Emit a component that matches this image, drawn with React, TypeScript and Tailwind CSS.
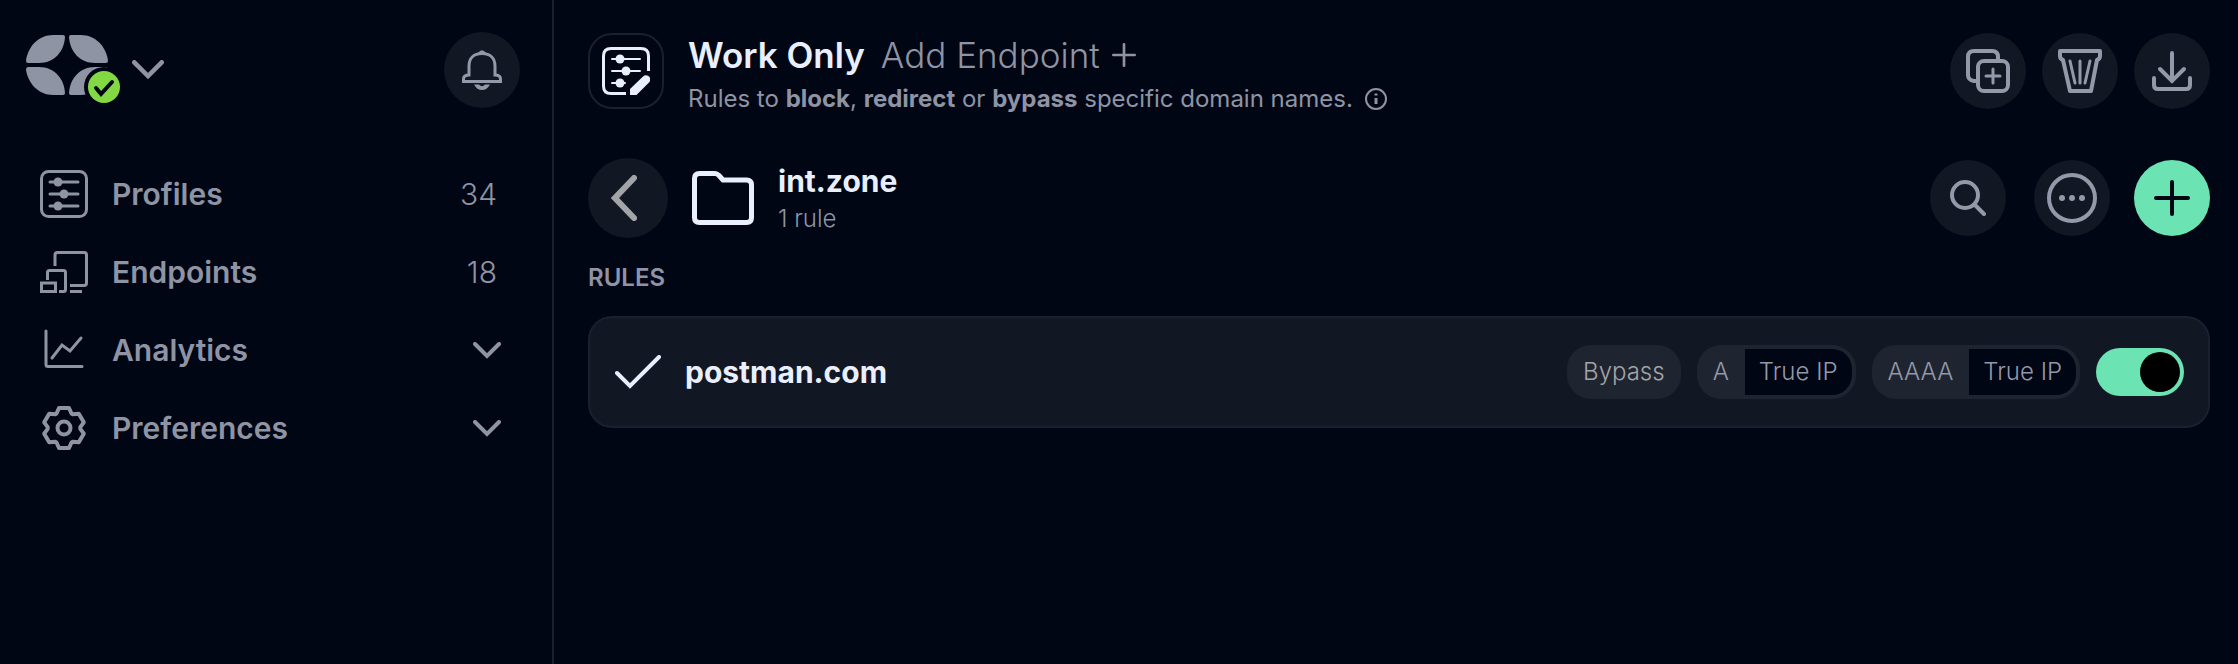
import { useState } from 'react';
import type { ReactNode } from 'react';

interface NavItem {
  label: string;
  icon: ReactNode;
  count?: number;
}

interface RecordChip {
  type: string;
  value: string;
}

const LogoIcon = () => (
  <svg width="96" height="70" viewBox="0 0 96 70" fill="#8f94a5">
    <path d="M0 25.500C2 11 13 0 27 0H37Q39 0 39 2C38 17 28 28 13 28H2Q0 28 0 25.500Z" />
    <path d="M82 25.500C80 11 69 0 55 0H45Q43 0 43 2C44 17 54 28 69 28H80Q82 28 82 25.500Z" />
    <path d="M0 34.500C2 49 13 60 27 60H37Q39 60 39 58C38 43 28 32 13 32H2Q0 32 0 34.500Z" />
    <path d="M82 34.500C80 49 69 60 55 60H45Q43 60 43 58C44 43 54 32 69 32H80Q82 32 82 34.500Z" />
    <circle cx="78" cy="52" r="20" fill="#010615" />
    <circle cx="78" cy="52" r="16" fill="#83d943" />
    <path d="M70 53l5 6 11-12" fill="none" stroke="#010615" strokeWidth="4" strokeLinecap="round" />
  </svg>
);

const ChevronIcon = ({ width = 28 }: { width?: number }) => (
  <svg width={width} viewBox="0 0 28 17" fill="none" stroke="currentColor" strokeWidth="4" strokeLinecap="round">
    <path d="M2 2l12 12L26 2" />
  </svg>
);

const BellIcon = () => (
  <svg width="40" height="40" viewBox="0 0 40 40" fill="none" stroke="currentColor" strokeWidth="3">
    <path d="M7 25V16C7 8 12 3.500 20 3.500S33 8 33 16V25C36 25 38.500 26 38.500 29V31.500H1.500V29C1.500 26 4 25 7 25Z" />
    <path d="M16 3Q20-2.500 24 3Z" fill="currentColor" stroke="none" />
    <path d="M12 34.500H17Q20 38 23 34.500H28Q25 40 20 40T12 34.500Z" fill="currentColor" stroke="none" />
  </svg>
);

const ProfilesIcon = () => (
  <svg width="48" height="48" viewBox="0 0 48 48" fill="none" stroke="currentColor" strokeWidth="3" strokeLinecap="round">
    <rect x="1.500" y="1.500" width="45" height="45" rx="7" />
    <path d="M10 12h28M10 24h28M10 36h28" />
    <g fill="currentColor" stroke="none">
      <circle cx="18" cy="12" r="4.500" />
      <circle cx="24" cy="24" r="4.500" />
      <circle cx="18" cy="36" r="4.500" />
    </g>
  </svg>
);

const ProfileEditIcon = () => (
  <svg width="48" height="48" viewBox="0 0 48 48" fill="none" stroke="currentColor" strokeWidth="3">
    <path d="M24 46.500H9Q1.500 46.500 1.500 39V9Q1.500 1.500 9 1.500H39Q46.500 1.500 46.500 9V24" />
    <path d="M10 12h28M10 24h28M10 36h13" strokeWidth="2" strokeLinecap="round" />
    <g fill="currentColor" stroke="none">
      <circle cx="18" cy="12" r="4.500" />
      <circle cx="24" cy="24" r="4.500" />
      <circle cx="18" cy="36" r="4.500" />
      <path d="M28 48V42L41 29.500C45 26 51 31 47 35.500L34.500 48Z" />
    </g>
  </svg>
);

const EndpointsIcon = () => (
  <svg width="48" height="48" viewBox="0 0 48 48" fill="none" stroke="currentColor" strokeWidth="3">
    <path d="M15 18V7Q15 4.500 17.500 4.500H44Q46.500 4.500 46.500 7V35Q46.500 37.500 44 37.500H30" />
    <path d="M30 43.500H42" />
    <path d="M7.500 32V24.500Q7.500 22.500 9.500 22.500H23.500Q25.500 22.500 25.500 24.500V41.500Q25.500 43.500 23.500 43.500H19" />
    <rect x="1.500" y="35" width="14" height="8.500" />
  </svg>
);

const AnalyticsIcon = () => (
  <svg width="48" height="48" viewBox="0 0 48 48" fill="none" stroke="currentColor" strokeWidth="3" strokeLinecap="round">
    <path d="M6 5V38.500Q6 40.500 8 40.500H42" />
    <path d="M12 32l10-13 8 6 11-13" />
  </svg>
);

const GearIcon = () => (
  <svg width="48" height="48" viewBox="-24 -24 48 48" fill="none" stroke="currentColor" strokeWidth="4" strokeLinejoin="round">
    <path d="M-7.500-14.500L-5-20H5L7.500-14.500L8.800-13.700L14.800-14.300L19.800-5.700L16.300-.8V.8L19.800 5.700L14.800 14.300L8.800 13.700L7.500 14.500L5 20H-5L-7.500 14.500L-8.800 13.700L-14.800 14.300L-19.800 5.700L-16.300 .8V-.8L-19.800-5.700L-14.800-14.300L-8.800-13.700Z" />
    <circle r="6.500" />
  </svg>
);

const FolderIcon = () => (
  <svg width="62" height="54" viewBox="0 0 62 54" fill="none" stroke="currentColor" strokeWidth="5" strokeLinejoin="round">
    <path d="M7.500 2.500H23Q25 2.500 27 4.500L31 9H54.500Q59.500 9 59.500 14V46.500Q59.500 51.500 54.500 51.500H7.500Q2.500 51.500 2.500 46.500V7.500Q2.500 2.500 7.500 2.500Z" />
  </svg>
);

const BackIcon = () => (
  <svg width="26" height="46" viewBox="0 0 26 46" fill="none" stroke="#a3a4a8" strokeWidth="6" strokeLinecap="round">
    <path d="M23 3L4 23l19 20" />
  </svg>
);

const DuplicateIcon = () => (
  <svg width="44" height="44" viewBox="0 0 44 44" fill="none" stroke="currentColor" strokeWidth="4">
    <path d="M10 32H8Q2 31 2 26V8Q2 2 8 2H26Q32 2 32 8V10" />
    <rect x="12" y="12" width="30" height="30" rx="6" />
    <path d="M27 20v14M20 27h14" strokeWidth="3" strokeLinecap="round" />
  </svg>
);

const TrashIcon = () => (
  <svg width="44" height="44" viewBox="0 0 44 44" fill="none" stroke="currentColor" strokeWidth="4" strokeLinejoin="round">
    <path d="M2 2H42V7Q42 10 39 11L33 42H12L5 11Q2 10 2 7Z" />
    <path d="M12 12l5 22M22 12v22M32 12l-5 22" strokeWidth="3" strokeLinecap="round" />
  </svg>
);

const DownloadIcon = () => (
  <svg width="40" height="42" viewBox="0 0 40 42" fill="none" stroke="currentColor" strokeWidth="4" strokeLinecap="round">
    <path d="M20 3V31M8 19l12 12 12-12" />
    <path d="M2 28V35Q2 39 6 39H34Q38 39 38 35V28" />
  </svg>
);

const SearchIcon = () => (
  <svg width="36" height="36" viewBox="0 0 36 36" fill="none" stroke="currentColor" strokeWidth="4" strokeLinecap="round">
    <circle cx="15" cy="15" r="13" />
    <path d="M25 25l9 9" />
  </svg>
);

const MoreIcon = () => (
  <svg width="50" height="50" viewBox="0 0 50 50" fill="currentColor">
    <circle cx="25" cy="25" r="23" fill="none" stroke="currentColor" strokeWidth="4" />
    <circle cx="15" cy="25" r="3" />
    <circle cx="25" cy="25" r="3" />
    <circle cx="35" cy="25" r="3" />
  </svg>
);

const PlusIcon = ({ size, stroke }: { size: number; stroke: number }) => (
  <svg width={size} height={size} viewBox="0 0 36 36" stroke="currentColor" strokeWidth={stroke} strokeLinecap="round">
    <path d="M18 2v32M2 18h32" />
  </svg>
);

const InfoIcon = () => (
  <svg width="22" height="22" viewBox="0 0 22 22" fill="none" stroke="currentColor" strokeWidth="2">
    <circle cx="11" cy="11" r="10" />
    <path d="M11 10v6M11 5.500v2" strokeWidth="3" />
  </svg>
);

const CheckIcon = () => (
  <svg width="46" height="34" viewBox="0 0 46 34" fill="none" stroke="currentColor" strokeWidth="4" strokeLinecap="round">
    <path d="M2 18l13 13L44 2" />
  </svg>
);

const navItems: NavItem[] = [
  { label: 'Profiles', icon: <ProfilesIcon />, count: 34 },
  { label: 'Endpoints', icon: <EndpointsIcon />, count: 18 },
  { label: 'Analytics', icon: <AnalyticsIcon /> },
  { label: 'Preferences', icon: <GearIcon /> },
];

const records: RecordChip[] = [
  { type: 'A', value: 'True IP' },
  { type: 'AAAA', value: 'True IP' },
];

function RoundButton({ label, children }: { label: string; children: ReactNode }) {
  return (
    <button
      type="button"
      aria-label={label}
      className="flex size-[76px] shrink-0 items-center justify-center rounded-full bg-[#111723] text-[#9499a9] hover:bg-[#1b2130]"
    >
      {children}
    </button>
  );
}

function Sidebar() {
  return (
    <aside className="w-[554px] shrink-0 border-r-2 border-[#1b2030] pt-8">
      <div className="flex h-[76px] items-center justify-between pr-8 pl-[26px]">
        <button type="button" aria-label="Account" className="flex items-center gap-[10px] text-[#8f94a5]">
          <LogoIcon />
          <ChevronIcon width={32} />
        </button>
        <RoundButton label="Notifications">
          <BellIcon />
        </RoundButton>
      </div>

      <nav className="mt-[47px] flex flex-col pr-[51px] pl-10">
        {navItems.map(item => (
          <a key={item.label} href="#" className="flex h-[78px] items-center gap-6 text-[#8f94a5]">
            {item.icon}
            <span className="flex-1 text-[30px] font-semibold">{item.label}</span>
            {item.count !== undefined ? (
              <span className="pr-1 text-[30px] font-light">{item.count}</span>
            ) : (
              <ChevronIcon />
            )}
          </a>
        ))}
      </nav>
    </aside>
  );
}

export default function App() {
  const [enabled, setEnabled] = useState(true);

  return (
    <div className="flex min-h-screen bg-[#010615] font-['Inter',sans-serif] text-[#e9effe]">
      <Sidebar />

      <main className="min-w-0 flex-1 pt-[33px] pr-7 pl-[34px]">
        {/* profile header */}
        <header className="flex items-start gap-6">
          <div className="flex size-[76px] shrink-0 items-center justify-center rounded-3xl border-2 border-[#1b2030]">
            <ProfileEditIcon />
          </div>
          <div className="flex-1">
            <div className="flex items-center gap-4 text-[35px] leading-[44px]">
              <h1 className="font-semibold">Work Only</h1>
              <button type="button" className="flex items-center gap-3 font-light text-[#8f94a5]">
                Add Endpoint
                <PlusIcon size={24} stroke={4} />
              </button>
            </div>
            <p className="flex items-center gap-3 text-2xl leading-[44px] text-[#8f94a5]">
              <span>
                Rules to <b>block</b>, <b>redirect</b> or <b>bypass</b> specific domain names.
              </span>
              <InfoIcon />
            </p>
          </div>
          <div className="flex gap-4">
            <RoundButton label="Duplicate profile">
              <DuplicateIcon />
            </RoundButton>
            <RoundButton label="Delete profile">
              <TrashIcon />
            </RoundButton>
            <RoundButton label="Download profile">
              <DownloadIcon />
            </RoundButton>
          </div>
        </header>

        {/* folder bar */}
        <div className="mt-[37px] flex items-center gap-6">
          <button
            type="button"
            aria-label="Back"
            className="flex size-20 shrink-0 items-center justify-center rounded-full bg-[#111723] pr-2"
          >
            <BackIcon />
          </button>
          <FolderIcon />
          <div className="flex-1 pt-1">
            <h2 className="text-[30px] leading-[38px] font-bold">int.zone</h2>
            <p className="text-2xl leading-[38px] font-light text-[#8f94a5]">1 rule</p>
          </div>
          <div className="flex">
            <RoundButton label="Search">
              <SearchIcon />
            </RoundButton>
            <div className="mr-6 ml-7">
              <RoundButton label="More options">
                <MoreIcon />
              </RoundButton>
            </div>
            <button
              type="button"
              aria-label="Add rule"
              className="flex size-[76px] items-center justify-center rounded-full bg-[#6ce3b2] text-[#010615]"
            >
              <PlusIcon size={36} stroke={4} />
            </button>
          </div>
        </div>

        <h3 className="mt-6 text-2xl font-semibold text-[#8f94a5]">RULES</h3>

        <div className="mt-[22px] flex h-28 items-center gap-4 rounded-3xl border-2 border-[#1b2030] bg-[#111723] pr-6 pl-[25px]">
          <CheckIcon />
          <span className="flex-1 pl-2 text-[30px] font-bold">postman.com</span>
          <span className="flex h-[54px] items-center rounded-3xl bg-[#1f2530] px-4 text-2xl font-light text-[#a3a4a8]">
            Bypass
          </span>
          {records.map(record => (
            <span
              key={record.type}
              className="flex h-[54px] items-stretch rounded-3xl bg-[#1f2530] p-1 text-2xl font-light text-[#9499a9]"
            >
              <span className="flex items-center px-3 pr-4">{record.type}</span>
              <span className="flex items-center rounded-r-[20px] bg-[#010615] px-[14px]">{record.value}</span>
            </span>
          ))}
          <input
            type="checkbox"
            aria-label="Enable rule for postman.com"
            checked={enabled}
            onChange={e => setEnabled(e.target.checked)}
            className="h-12 w-[88px] cursor-pointer appearance-none rounded-full bg-[#1f2530] p-1 before:block before:size-10 before:rounded-full before:bg-black checked:bg-[#6ce3b2] checked:before:ml-10"
          />
        </div>
      </main>
    </div>
  );
}
